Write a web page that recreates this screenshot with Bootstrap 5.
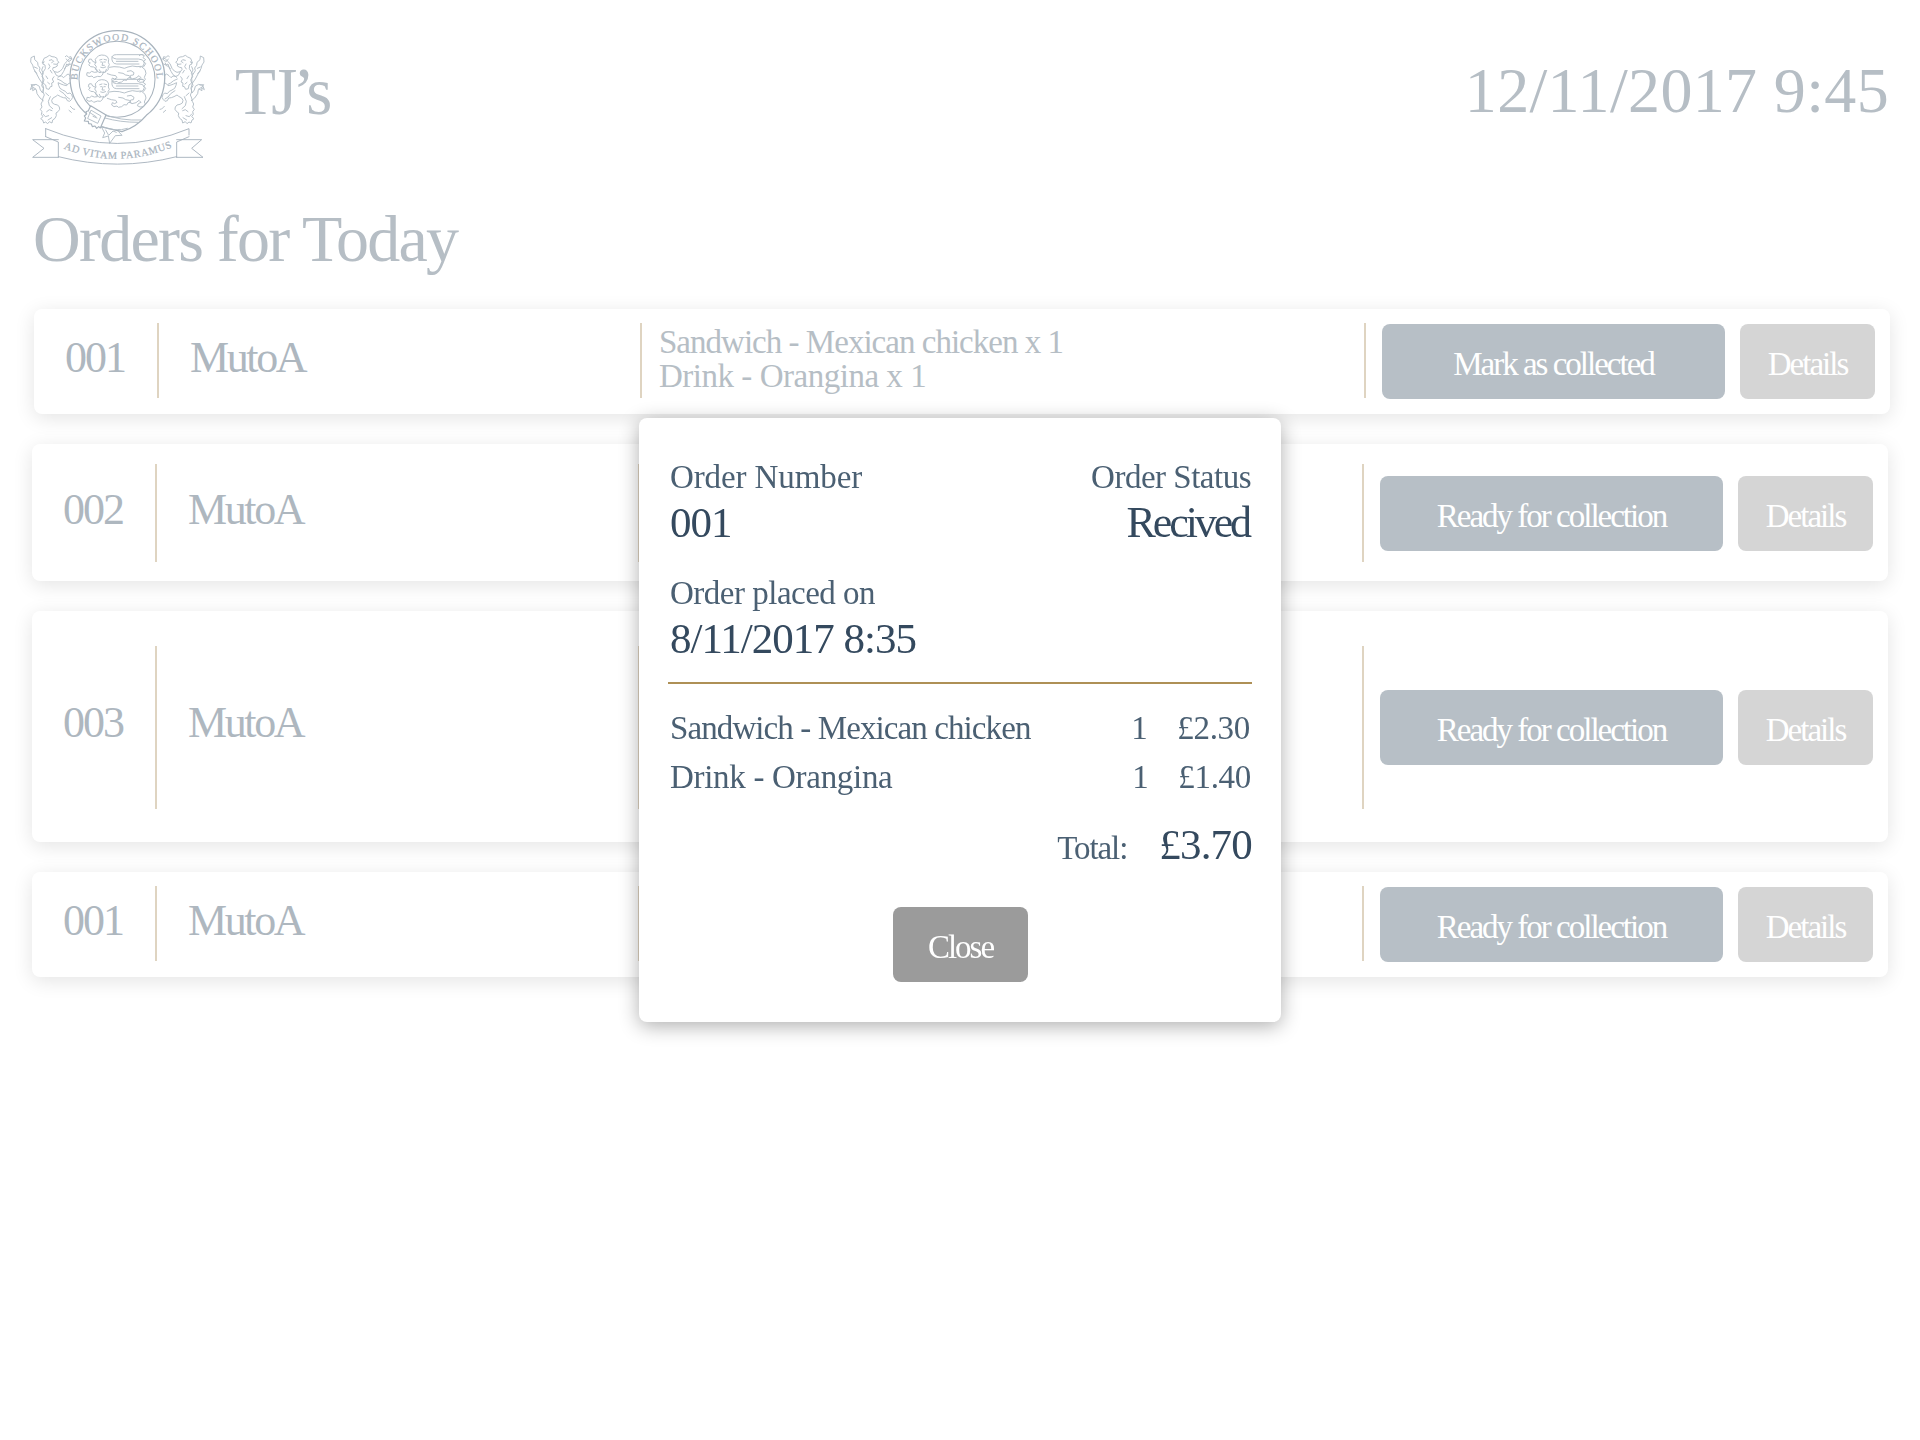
<!DOCTYPE html>
<html lang="en">
<head>
<meta charset="utf-8">
<meta name="viewport" content="width=device-width, initial-scale=1">
<title>TJ’s – Orders for Today</title>
<link href="https://cdn.jsdelivr.net/npm/bootstrap@5.3.0/dist/css/bootstrap.min.css" rel="stylesheet">
<style>
  body { font-family: "Liberation Serif", serif; color: #b6bec5; background: #fff; overflow: hidden; }
  .page-shell { width: 1920px; height: 1440px; padding-top: 20px; }
  .page-top { height: 155px; padding: 0 31px 0 20px; }
  .crest { width: 200px; height: 155px; }
  .shop-name { font-size: 67px; line-height: 80px; letter-spacing: -4.8px; margin: 0 0 14px 15px; }
  .clock { font-size: 64px; line-height: 80px; margin-bottom: 13px; letter-spacing: .35px; }
  .page-title { font-size: 66px; line-height: 80px; letter-spacing: -1.75px; font-weight: 400; margin: 24px 0 30px 33px; }
  .order-list { display: flex; flex-direction: column; gap: 30px; padding-left: 32px; }
  .order { --rule-top: 14px; --rule-bottom: 16px; width: 1856px; height: 105px; border: 0; border-radius: 8px; box-shadow: 0 4px 20px rgba(0,0,0,.11); flex-direction: row; }
  .order-new { margin-left: 2px; }
  .order-md { height: 137px; --rule-top: 20px; --rule-bottom: 19px; }
  .order-lg { height: 231px; --rule-top: 35px; --rule-bottom: 33px; }
  .rule-v { width: 2px; background: #dfd4c1; margin: var(--rule-top) 0 var(--rule-bottom); }
  .order-no, .order-name { font-size: 44px; line-height: 50px; color: #aeb7bf; padding-bottom: 8px; }
  .order-md .order-no, .order-md .order-name { padding-bottom: 6px; }
  .order-no { width: 123px; padding-left: 31px; letter-spacing: -2px; }
  .order-name { width: 481px; padding-left: 31px; letter-spacing: -2.4px; }
  .order-items { width: 722px; padding: 0 0 6px 17px; font-size: 33px; line-height: 34px; }
  .ls-a { letter-spacing: -.98px; }
  .ls-b { letter-spacing: -.48px; }
  .order-actions { gap: 15px; padding-left: 16px; }
  .order-md .order-actions, .order-lg .order-actions { padding-top: 2px; }
  .btn-order { height: 75px; border: 0; border-radius: 8px; padding: 6px 0 0; font-size: 33px; line-height: 69px; letter-spacing: -2px; color: #fff; }
  .btn-order:hover { color: #fff; }
  .btn-main { width: 343px; background: #b7bfc6; }
  .btn-side { width: 135px; background: #d5d5d5; }
  .btn-shut { width: 135px; background: #9b9b9b; }
  .modal { --bs-modal-width: 642px; }
  .order-dialog { height: 604px; border: 0; border-radius: 8px; padding: 39px 30px 0 31px; color: #34495e; box-shadow: 0 4px 20px rgba(0,0,0,.32); }
  .lbl { font-size: 33px; line-height: 40px; color: #4b6073; letter-spacing: -.5px; }
  .lbl-wide { letter-spacing: -.1px; }
  .val { font-size: 43px; line-height: 52px; margin-bottom: -2px; letter-spacing: -1px; color: #34495e; }
  .val-tight { font-size: 44px; letter-spacing: -3.1px; margin-right: 2px; }
  .block-gap { margin-top: 26px; }
  .rule-h { height: 2px; background: #ae9056; margin: 19px -1px 20px -2px; }
  .line-item { font-size: 33px; line-height: 49px; color: #4b6073; }
  .line-item .what { letter-spacing: -.9px; }
  .line-item .what-b { letter-spacing: -.3px; }
  .qty { width: 46px; }
  .price { letter-spacing: -.3px; }
  .shift-l { margin-right: 1px; }
  .total-row { margin: 18px -1px 37px 0; gap: 32px; }
  .total-row .lbl { letter-spacing: -1.1px; }
  .total-row .val { line-height: 50px; margin-bottom: 0; letter-spacing: -.8px; }
</style>
<script src="https://cdn.jsdelivr.net/npm/bootstrap@5.3.0/dist/js/bootstrap.bundle.min.js"></script>
</head>
<body>
<div class="page-shell">
  <header class="page-top d-flex align-items-center">
    <svg class="crest" viewBox="0 0 600 465" fill="none" stroke="#b3bdc6" stroke-width="2.8" stroke-linejoin="round" stroke-linecap="round" role="img" aria-label="Buckswood School crest">
      <defs>
        <path id="arcTop" d="M172 180 A119 119 0 0 1 410 180"/>
        <path id="arcMotto" d="M127 384 Q290 450 456 382"/>
        <g id="supporter">
          <path d="M67 128l5-13 9-4 7-5 8 4 8 1 7 4 1 7 5 5-6 4 1 7-7 4-6 1-1 6 5 6 6 11 7 3 9-1 6 5 6-6 7-5 5 3 4 7-4 5 6 4-3 7-7 3-5 6-9-2-8-3-9-4 2 8 4 9 8 5 8 4 6 7 8-2 5 5 3 8-4 7-5 5-7-2-4-8-8-1-8-3-9-5-5 4-9 5-4 7 2 8 7 4 9 2 5 6 1 7-5 7-6 4 1 8-4 8-7 5-2 9-8-4-5 6-6-5-6 3-3-9-6-4 7-6-5-7 2-8-5-7 5-7-3-9 4-8 2-10 4-9-4-9 1-11-5-8 3-11 1-12-3-11 5-9 5-8-1-11-7-3 4-6z"/>
          <path d="M69 140l-4 10 5 10-4 10 6 9-3 10 8 6 2 11 8 2 4-8 5-1-1-10 6-3-4-9 5-7M88 121l8-2 5 5-6 4M101 132l8 1M86 132l4 8-5 7M91 151l5 8M78 168l5 8M83 187l6 5"/>
          <path d="M103 155l10 2 8-4 7-8 6-14 8-8 7-8 7 2M114 172l11-8 6-10 5-10 4-12 6 3 7-3M133 146l6-7 6-2 3-8M112 177l11 5 9 7 8 4M119 212l13 9 8 10 9 6M91 230l-6 14 3 13 10 9M77 219l9 8M80 275l8-6 8 3M69 282l7 8 10-3M84 300l11-7"/>
          <path d="M70 242l-10-8-9-13-2-12-9-7-9 7 5-13 12-3 10 6 3 11 7 9 3-15-4-14-9-13-8-15-9-16-3-11-6-9 1-13 10-5 1 11 9 8 1 9 6 8-2 8 7 11M44 195l-11-1 6 9-1 9 9-5M51 160l-8-7M52 145l-9-4"/>
          <path d="M136 110l4-3 6 5 7-2 2 7-5 6-6 1-5-7M160 182l8-2M157 195l10 4M151 259l8 8 5 1M147 271l7 6"/>
        </g>
        <g id="passant">
          <path d="M231 112l5-5 9-2 9 1 8 4 4 8-1 9 3 7-4 7 1 7-6 6-7 4-7-2-8 2-6-7-5-3 3-8-5-7 4-6-2-8z"/>
          <path d="M239 120l7-2M252 118l8 2M242 126h3M253 126h3M249 126l-3 10h7M242 142q7 4 15-1M238 149l4 8M259 148l-3 8"/>
          <path d="M227 128l-9-4-4-7-7 1-2 8 6 3-5 5 6 6 9 1 9 7 2 8-9 1-8-3-6 5-8-1-1 8 7 4 9-2 5 5 12-4 8 1 6-5 4-10"/>
          <path d="M268 142l14-2 16 1 15 4 11-4 13-3 14 2 12-1M262 161l12 4 13 2 4 6-7 4-7-3-2 7 7 5 9-2 4 4 10-2 7-6 8 1 4-7 9-1-5-6-11-2-8-5-13-2M322 154l11-2 9 6-2 7-8 1-3 7 7 4 12-3 9-7 6 6-8 4-3 6 8 4 10-1 6-8-3-6 5-12-3-11-8-7"/>
          <path d="M360 142l9-4 4-9-5-9-13-3h-65q-12-1-13-7 2-7 12-6h80M276 110q-3 21 14 22h67M289 124h65M358 107l5-4 10 4-4 6 8 6-6 5 6 7-6 9"/>
        </g>
      </defs>
      <use href="#supporter"/>
      <use href="#supporter" transform="matrix(-1 0 0 1 584 0)"/>
      <path d="M204 285A142 142 0 1 1 379 286C360 309 337 325 306 335L238 319" stroke="#a8b3bd" fill="#fff" stroke-width="3.8"/>
      <circle cx="291" cy="178" r="114" stroke="#a8b3bd" stroke-width="3.2"/>
      <use href="#passant"/>
      <use href="#passant" transform="translate(0 74)"/>
      <path d="M250 282Q300 303 364 300M255 294Q300 307 354 307M245 319Q287 337 322 325" />
      <path d="M212 257l46 28-17 39-5-4-6 5-5-7-8 2-3-8-8-1-1-7-12-1 4-9-4-6 7-6-2-7 7-3z" fill="#fff" stroke="#a8b3bd" stroke-width="3.5"/>
      <path d="M214 271l29 17-10 22-29-14zM207 276l21 14M219 289l12 5"/>
      <path d="M245 322l9 17-6 14 17-5 4 22 17-23 20-1-11-12 2-6M257 330l9 16 13-13 10 4"/>
      <path d="M77 326Q292 415 507 326V345M77 326V350M115 359H38L72 385 38 412H115M470 359H545L515 385 549 412H470M77 350L115 366V412M507 350L470 366V412M115 410Q292 455 470 410" stroke="#a8b3bd"/>
      <g fill="#a8b3bd" stroke="#a8b3bd" stroke-width=".6" font-family="Liberation Serif, serif">
        <text font-size="29"><textPath href="#arcTop" textLength="370">BUCKSWOOD SCHOOL</textPath></text>
        <text font-size="31"><textPath href="#arcMotto" textLength="334" startOffset="4">AD VITAM PARAMUS</textPath></text>
      </g>
    </svg>
    <div class="shop-name">TJ’s</div>
    <div class="clock ms-auto">12/11/2017 9:45</div>
  </header>

  <h1 class="page-title">Orders for Today</h1>

  <main class="order-list">
    <article class="card order order-new">
      <div class="order-no align-self-center">001</div>
      <div class="rule-v"></div>
      <div class="order-name align-self-center">MutoA</div>
      <div class="rule-v"></div>
      <div class="order-items align-self-center">
        <div class="ls-a">Sandwich - Mexican chicken x 1</div>
        <div class="ls-b">Drink - Orangina x 1</div>
      </div>
      <div class="rule-v"></div>
      <div class="order-actions d-flex align-items-center">
        <button type="button" class="btn btn-order btn-main">Mark as collected</button>
        <button type="button" class="btn btn-order btn-side">Details</button>
      </div>
    </article>

    <article class="card order order-md">
      <div class="order-no align-self-center">002</div>
      <div class="rule-v"></div>
      <div class="order-name align-self-center">MutoA</div>
      <div class="rule-v"></div>
      <div class="order-items"></div>
      <div class="rule-v"></div>
      <div class="order-actions d-flex align-items-center">
        <button type="button" class="btn btn-order btn-main">Ready for collection</button>
        <button type="button" class="btn btn-order btn-side">Details</button>
      </div>
    </article>

    <article class="card order order-lg">
      <div class="order-no align-self-center">003</div>
      <div class="rule-v"></div>
      <div class="order-name align-self-center">MutoA</div>
      <div class="rule-v"></div>
      <div class="order-items"></div>
      <div class="rule-v"></div>
      <div class="order-actions d-flex align-items-center">
        <button type="button" class="btn btn-order btn-main">Ready for collection</button>
        <button type="button" class="btn btn-order btn-side">Details</button>
      </div>
    </article>

    <article class="card order">
      <div class="order-no align-self-center">001</div>
      <div class="rule-v"></div>
      <div class="order-name align-self-center">MutoA</div>
      <div class="rule-v"></div>
      <div class="order-items"></div>
      <div class="rule-v"></div>
      <div class="order-actions d-flex align-items-center">
        <button type="button" class="btn btn-order btn-main">Ready for collection</button>
        <button type="button" class="btn btn-order btn-side">Details</button>
      </div>
    </article>
  </main>
</div>

<div class="modal d-block" tabindex="-1" role="dialog" aria-label="Order 001">
  <div class="modal-dialog modal-dialog-centered">
    <div class="modal-content order-dialog">
      <div class="d-flex justify-content-between">
        <div>
          <div class="lbl lbl-wide">Order Number</div>
          <div class="val">001</div>
        </div>
        <div class="text-end">
          <div class="lbl">Order Status</div>
          <div class="val val-tight">Recived</div>
        </div>
      </div>
      <div class="block-gap">
        <div class="lbl">Order placed on</div>
        <div class="val">8/11/2017 8:35</div>
      </div>
      <div class="rule-h"></div>
      <div class="line-item d-flex shift-l">
        <span class="what me-auto">Sandwich - Mexican chicken</span>
        <span class="qty">1</span>
        <span class="price">£2.30</span>
      </div>
      <div class="line-item d-flex">
        <span class="what-b me-auto">Drink - Orangina</span>
        <span class="qty">1</span>
        <span class="price">£1.40</span>
      </div>
      <div class="total-row d-flex justify-content-end align-items-baseline">
        <span class="lbl">Total:</span>
        <span class="val">£3.70</span>
      </div>
      <button type="button" class="btn btn-order btn-shut align-self-center">Close</button>
    </div>
  </div>
</div>
</body>
</html>
